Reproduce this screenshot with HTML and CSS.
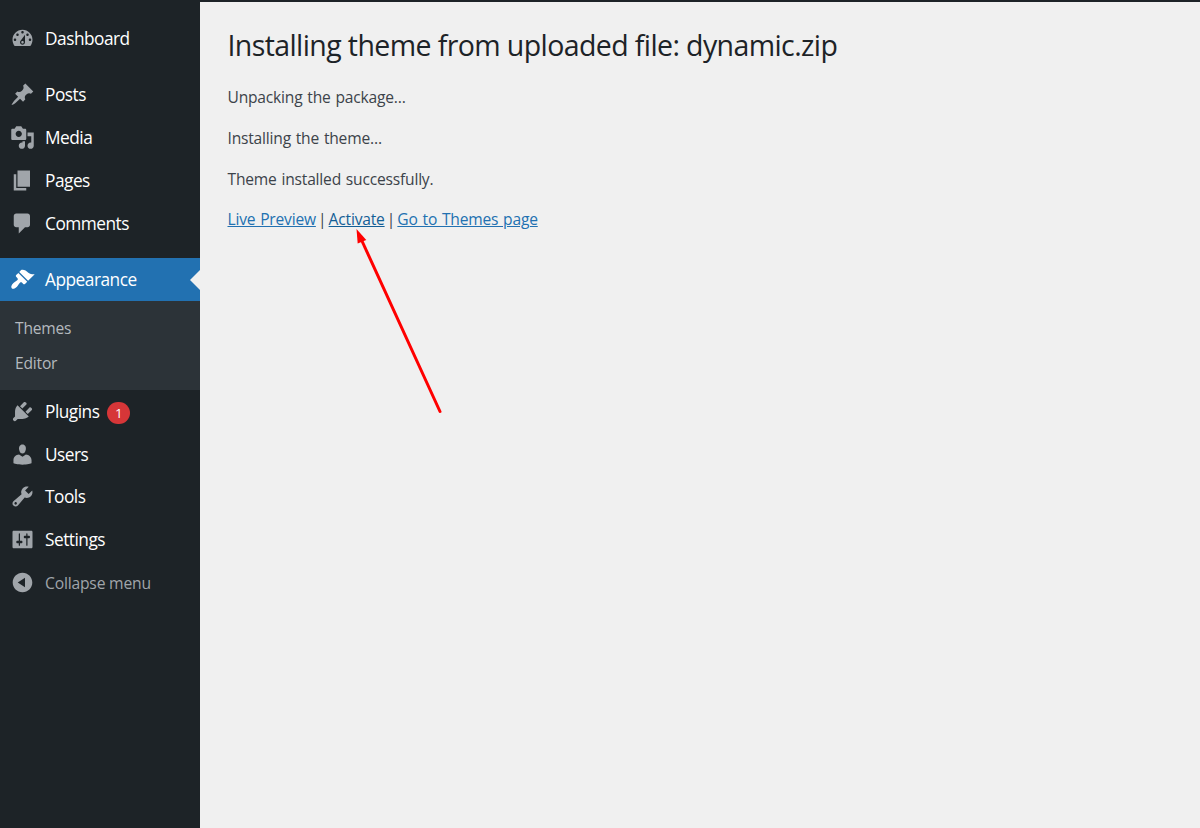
FILE: index.html
```html
<!DOCTYPE html>
<html lang="en">
<head>
<meta charset="utf-8">
<title>Installing theme</title>
<link rel="stylesheet" href="styles.css">
</head>
<body>
<div class="app">
  <nav class="sidebar">
    <ul class="menu">
      <li class="item"><svg class="icon" viewBox="0 0 20 20"><path d="M3.76 16h12.48c1.1-1.37 1.76-3.11 1.76-5 0-4.42-3.58-8-8-8s-8 3.58-8 8c0 1.89.66 3.63 1.76 5zM10 4c.55 0 1 .45 1 1s-.45 1-1 1-1-.45-1-1 .45-1 1-1zM6 6c.55 0 1 .45 1 1s-.45 1-1 1-1-.45-1-1 .45-1 1-1zm8 0c.55 0 1 .45 1 1s-.45 1-1 1-1-.45-1-1 .45-1 1-1zm-5.37 5.55L12 7v6c0 1.1-.9 2-2 2s-2-.9-2-2c0-.57.24-1.08.63-1.45zM4 10c.55 0 1 .45 1 1s-.45 1-1 1-1-.45-1-1 .45-1 1-1zm12 0c.55 0 1 .45 1 1s-.45 1-1 1-1-.45-1-1 .45-1 1-1zm-5 3c0-.55-.45-1-1-1s-1 .45-1 1 .45 1 1 1 1-.45 1-1z"/></svg><span class="label">Dashboard</span></li>
      <li class="separator"></li>
      <li class="item"><svg class="icon" viewBox="0 0 20 20"><path d="M10.44 3.02l1.82-1.82 6.36 6.35-1.83 1.82c-1.05-.68-2.48-.57-3.41.36l-.75.75c-.92.93-1.04 2.35-.35 3.41l-1.83 1.82-2.41-2.41-2.8 2.79c-.42.42-3.38 2.71-3.8 2.29s1.86-3.39 2.28-3.81l2.79-2.79L4.1 9.36l1.83-1.82c1.05.69 2.48.57 3.4-.36l.75-.75c.93-.92 1.05-2.35.36-3.41z"/></svg><span class="label">Posts</span></li>
      <li class="item"><svg class="icon" viewBox="0 0 20 20"><path d="M13 11V4c0-.55-.45-1-1-1h-1.67L9 1H5L3.67 3H2c-.55 0-1 .45-1 1v7c0 .55.45 1 1 1h10c.55 0 1-.45 1-1zM7 4.5c1.38 0 2.5 1.12 2.5 2.5S8.38 9.5 7 9.5 4.5 8.38 4.5 7 5.62 4.5 7 4.5zM14 6h5v10.5c0 1.38-1.12 2.5-2.5 2.5S14 17.88 14 16.5s1.12-2.5 2.5-2.5c.17 0 .34.02.5.05V9h-3V6zm-4 8.05V13h2v3.5c0 1.38-1.12 2.5-2.5 2.5S7 17.88 7 16.5 8.12 14 9.5 14c.17 0 .34.02.5.05z"/></svg><span class="label">Media</span></li>
      <li class="item"><svg class="icon" viewBox="0 0 20 20"><path d="M6 15V2h10v13H6zm-1 1h8v2H3V5h2v11z"/></svg><span class="label">Pages</span></li>
      <li class="item"><svg class="icon" viewBox="0 0 20 20"><path d="M5 2h9c1.1 0 2 .9 2 2v7c0 1.1-.9 2-2 2h-2l-5 5v-5H5c-1.1 0-2-.9-2-2V4c0-1.1.9-2 2-2z"/></svg><span class="label">Comments</span></li>
      <li class="separator"></li>
      <li class="item current"><svg class="icon" viewBox="0 0 20 20"><path d="M14.48 11.06L7.41 3.99l1.5-1.5c.5-.56 2.3-.47 3.51.32 1.21.8 1.43 1.28 2.91 2.1 1.18.64 2.45 1.26 4.45.85zm-.71.71L6.7 4.7 4.93 6.47c-.39.39-.39 1.02 0 1.41l1.06 1.06c.39.39.39 1.03 0 1.42-.6.6-1.43 1.11-2.21 1.69-.35.26-.7.53-1.01.84C1.43 14.23.4 16.08 1.4 17.07c.99 1 2.84-.03 4.18-1.36.31-.31.58-.66.85-1.02.57-.78 1.08-1.61 1.69-2.21.39-.39 1.02-.39 1.41 0l1.06 1.06c.39.39 1.02.39 1.41 0z"/></svg><span class="label">Appearance</span></li>
      <li>
        <ul class="submenu">
          <li class="subitem"><span>Themes</span></li>
          <li class="subitem"><span>Editor</span></li>
        </ul>
      </li>
      <li class="item"><svg class="icon" viewBox="0 0 20 20"><path d="M13.11 4.36L9.87 7.6 8 5.73l3.24-3.24c.35-.34 1.05-.2 1.56.32.52.51.66 1.21.31 1.55zm-8 1.77l.91-1.12 9.01 9.01-1.19.84c-.71.71-2.63 1.16-3.82 1.16H6.14L4.9 17.26c-.59.59-1.54.59-2.12 0-.59-.58-.59-1.53 0-2.12l1.24-1.24v-3.88c0-1.13.4-3.19 1.09-3.89zm7.26 3.97l3.24-3.24c.34-.35 1.04-.21 1.55.31.52.51.66 1.21.31 1.55l-3.24 3.25z"/></svg><span class="label">Plugins</span><span class="count">1</span></li>
      <li class="item"><svg class="icon" viewBox="0 0 20 20"><path d="M10 9.25c-2.27 0-2.73-3.44-2.73-3.44C7 4.02 7.82 2 9.97 2c2.16 0 2.98 2.02 2.71 3.81 0 0-.41 3.44-2.68 3.44zm0 2.57L12.72 10c2.39 0 4.52 2.33 4.52 4.53v2.49s-3.65 1.13-7.24 1.13c-3.65 0-7.24-1.13-7.24-1.13v-2.49c0-2.25 1.94-4.48 4.47-4.48z"/></svg><span class="label">Users</span></li>
      <li class="item"><svg class="icon" viewBox="0 0 20 20"><path d="M16.68 9.77c-1.34 1.34-3.3 1.67-4.95.99l-5.41 6.52c-.99.99-2.59.99-3.58 0s-.99-2.59 0-3.57l6.52-5.42c-.68-1.65-.35-3.61.99-4.95 1.28-1.28 3.12-1.62 4.72-1.06l-2.89 2.89 2.82 2.82 2.86-2.87c.53 1.58.18 3.39-1.08 4.65zM3.81 16.21c.4.39 1.04.39 1.43 0 .4-.4.4-1.04 0-1.43-.39-.4-1.03-.4-1.43 0-.39.39-.39 1.03 0 1.43z"/></svg><span class="label">Tools</span></li>
      <li class="item"><svg class="icon" viewBox="0 0 20 20"><path d="M18 16V4c0-.55-.45-1-1-1H3c-.55 0-1 .45-1 1v12c0 .55.45 1 1 1h14c.55 0 1-.45 1-1zM8 11h1c.55 0 1 .45 1 1s-.45 1-1 1H8v1.5c0 .28-.22.5-.5.5s-.5-.22-.5-.5V13H6c-.55 0-1-.45-1-1s.45-1 1-1h1V5.5c0-.28.22-.5.5-.5s.5.22.5.5V11zm5-2h-1c-.55 0-1-.45-1-1s.45-1 1-1h1V5.5c0-.28.22-.5.5-.5s.5.22.5.5V7h1c.55 0 1 .45 1 1s-.45 1-1 1h-1v5.5c0 .28-.22.5-.5.5s-.5-.22-.5-.5V9z"/></svg><span class="label">Settings</span></li>
      <li class="item collapse"><svg class="icon" viewBox="0 0 20 20"><path d="M10 2.16c4.33 0 7.84 3.51 7.84 7.84s-3.51 7.84-7.84 7.84S2.16 14.33 2.16 10 5.71 2.16 10 2.16zm2 11.72V6.12L6.18 9.97z"/></svg><span class="label">Collapse menu</span></li>
    </ul>
  </nav>
  <main class="content">
    <h1 class="title">Installing theme from uploaded file: dynamic.zip</h1>
    <p class="line unpacking">Unpacking the package…</p>
    <p class="line">Installing the theme…</p>
    <p class="line">Theme installed successfully.</p>
    <p class="line actions"><a class="link" href="#">Live Preview</a><span class="bar">|</span><a class="link active" href="#">Activate</a><span class="bar">|</span><a class="link" href="#">Go to Themes page</a></p>
    <svg class="arrow" viewBox="0 0 90 190"><path class="shaft" d="M12 12L90 182.500"/><path class="head" d="M6.500 0L7.700 14.500L16.300 11Z"/></svg>
  </main>
</div>
</body>
</html>
```
FILE: styles.css
```css
* { box-sizing: border-box; }
body {
  margin: 0;
  font-family: "Open Sans", "Noto Sans", sans-serif;
  background: #f0f0f0;
  color: #3c434a;
}
ul { margin: 0; padding: 0; list-style: none; }
.app { display: flex; height: 828px; overflow: hidden; }
.sidebar { width: 200px; background: #1d2327; padding-top: 17px; }
.item {
  display: flex;
  align-items: center;
  height: 42.85px;
  padding-left: 10px;
  color: #fff;
  font-size: 17.3px;
  letter-spacing: -0.5px;
  position: relative;
}
.icon { width: 25px; height: 25px; fill: #a0a5aa; margin-right: 10px; flex: none; }
.separator { height: 13.4px; }
.current { background: #2271b1; }
.current .icon { fill: #fff; }
.current::after {
  content: "";
  position: absolute;
  right: 0;
  top: 11.500px;
  border: 10px solid transparent;
  border-left: 0;
  border-right-color: #f0f0f0;
}
.submenu { background: #2c3338; height: 89px; padding-top: 10px; }
.subitem {
  height: 35px;
  padding-left: 15px;
  line-height: 35px;
  font-size: 15.6px;
  letter-spacing: -0.2px;
  color: #b4b9be;
}
.count {
  margin: 3px 0 0 8px;
  width: 23px;
  height: 22px;
  border-radius: 11.500px;
  background: #d63638;
  font-size: 13.5px;
  line-height: 22px;
  text-align: center;
  letter-spacing: 0;
}
.collapse { font-size: 15.7px; letter-spacing: -0.2px; color: #a0a5aa; }
.content {
  position: relative;
  flex: 1;
  border-top: 2px solid #1d2327;
  padding: 23px 0 0 27.500px;
}
.title {
  margin: 0;
  font-size: 28.500px;
  font-weight: 400;
  line-height: 40px;
  letter-spacing: -0.6px;
  color: #1d2327;
  white-space: nowrap;
}
.line {
  margin: 0 0 17px;
  font-size: 15.6px;
  line-height: 24px;
  letter-spacing: -0.2px;
  word-spacing: 1px;
  white-space: nowrap;
}
.unpacking { margin-top: 20px; }
.actions { display: flex; margin-top: -1px; }
.bar { margin: 0 2.200px; }
.link { color: #2271b1; text-decoration: underline; }
.link.active { color: #135e96; }
.arrow {
  position: absolute;
  left: 150px;
  top: 227px;
  width: 90px;
  height: 190px;
  overflow: visible;
}
.shaft { stroke: #f00; stroke-width: 3; stroke-linecap: round; }
.head { fill: #f00; }
```
